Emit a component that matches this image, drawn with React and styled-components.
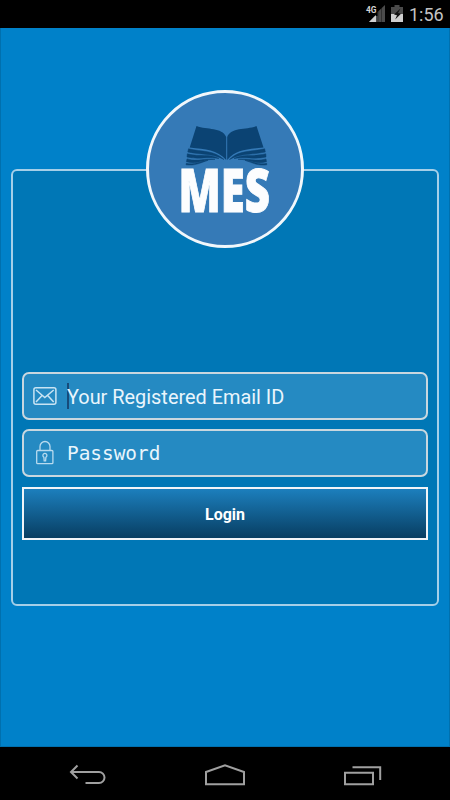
import React from 'react';
import styled, { createGlobalStyle } from 'styled-components';

const StatusBar = () => (
	<StyledStatus>
		<svg width="40" height="28" viewBox="0 0 40 28">
			<text x="1" y="12.600" fill="#d4d4d4" fontFamily="Roboto, sans-serif" fontSize="9.500" fontWeight="700" textLength="10.500" lengthAdjust="spacingAndGlyphs">4G</text>
			<path d="M20 5v17H4l5.500-6h3V12z" fill="#4b4b4b" />
			<path d="M4 22l7-7v7z" fill="#d0d0d0" />
			<path d="M13 22V11M16.500 22V8" stroke="#000" strokeWidth="0.700" opacity="0.500" />
			<path d="M29.500 5h5v2H38v7H26V7h3.500z" fill="#4b4b4b" />
			<path d="M26 14h12v8H26z" fill="#cfcfcf" />
			<path d="M35.500 8.500l-6.500 6 3 .7-1.800 4.300 5.800-5.800-3-.6z" fill="#111" />
		</svg>
		<span>1:56</span>
	</StyledStatus>
);

const Logo = () => (
	<StyledLogo>
		<svg width="152" height="152" viewBox="149 93 152 152">
			<g fill="#0b4373">
				<path d="M196.500 126C207 130 222 127 226.200 137V160C217 149.500 206 149.500 189.700 147.500z" />
				<path d="M256.500 126C246 130 231 127 227.200 137V160C236 149.500 247 149.500 263.500 147.500z" />
				<g stroke="#0b4373" strokeWidth="0.500">
					<path d="M188.500 148.800C202 152 214 150 224 159.500C212 153 201 155 187.800 152z" />
					<path d="M187.300 153.800C201 157 209 153.500 219 158.500C207 156 200 160 187 157z" />
					<path d="M187 158.900C198 162 205 158 215 159.300C204 159 198 165 186.400 161.700z" />
					<path d="M186.300 163.300C194 165 199 162 208 160.300C200 163 195 166 186 164.800z" />
					<path d="M264.700 148.800C251 152 239 150 229.500 159.500C241 153 252 155 265.300 152z" />
					<path d="M265.800 153.800C252 157 244 153.500 234 158.500C246 156 253 160 266 157z" />
					<path d="M266 158.900C255 162 248 158 238 159.300C249 159 255 165 266.500 161.700z" />
					<path d="M266.700 163.300C259 165 254 162 245 160.300C253 163 258 166 266.800 164.800z" />
				</g>
			</g>
			<text
				x="178.500"
				y="212"
				textLength="91.500"
				lengthAdjust="spacingAndGlyphs"
				fill="#fcfdfe"
				stroke="#fcfdfe"
				strokeWidth="1"
				fontFamily="'Open Sans', sans-serif"
				fontWeight="800"
				fontSize="60"
			>
				MES
			</text>
		</svg>
	</StyledLogo>
);

const MailIcon = () => (
	<svg width="24" height="20" viewBox="0 0 24 20" fill="none" stroke="#c9e4f3" strokeWidth="1.500">
		<rect x="0.900" y="1.700" width="22" height="16.600" rx="2" />
		<path d="M3 4l8.800 7.500L20.700 4M3 16l6-6.500M20.700 16l-6-6.500" />
	</svg>
);

const LockIcon = () => (
	<svg width="24" height="26" viewBox="0 0 24 26" fill="none" stroke="#b9dbef" strokeWidth="1.300">
		<rect x="3.700" y="10.500" width="16.200" height="13.200" rx="1" />
		<path d="M7 10.500V6.500a5 5 0 0 1 10 0V10.500" />
		<path d="M10.900 17.200a2 2 0 1 1 2 0l-.3 3.600h-1.400z" />
	</svg>
);

const NavBar = () => (
	<StyledNav>
		<svg width="38" height="22" viewBox="0 0 38 22">
			<path d="M8.500 1.500L2 8l6.500 6.500M2.500 8H30a5.500 5.500 0 0 1 0 11H16.500" />
		</svg>
		<svg width="42" height="24" viewBox="0 0 42 24">
			<path d="M2 9L21 2.200 40 9v12.300H2z" />
		</svg>
		<svg width="40" height="22" viewBox="0 0 40 22">
			<path d="M3 8.700h28v11.600H3zM10.500 3.200H38.200V16" />
		</svg>
	</StyledNav>
);

const App = () => (
	<StyledScreen>
		<GlobalStyle />
		<StatusBar />
		<StyledContent>
			<StyledPanel>
				<Logo />
				<StyledField>
					<MailIcon />
					<StyledCaret />
					<span>Your Registered Email ID</span>
				</StyledField>
				<StyledField $mono>
					<LockIcon />
					<StyledCaret $hidden />
					<span>Password</span>
				</StyledField>
				<StyledButton>Login</StyledButton>
			</StyledPanel>
		</StyledContent>
		<NavBar />
	</StyledScreen>
);

export default App;

const GlobalStyle = createGlobalStyle`
	* {
		box-sizing: border-box;
	}

	body {
		margin: 0;
		background: #000;
		font-family: Roboto, sans-serif;
	}

	svg {
		display: block;
		flex-shrink: 0;
	}
`;

const StyledScreen = styled.div`
	width: 450px;
	height: 800px;
	display: flex;
	flex-direction: column;
	overflow: hidden;
`;

const StyledStatus = styled.div`
	height: 28px;
	background: #000;
	display: flex;
	justify-content: flex-end;
	padding-right: 7px;

	span {
		width: 34px;
		margin-left: 4px;
		color: #c4c4c4;
		font-size: 18px;
		line-height: 29px;
		white-space: nowrap;
	}
`;

const StyledContent = styled.div`
	height: 719px;
	padding: 141px 10px 0;
	background: #0081c9;
	border: solid #0070ae;
	border-width: 0 1px 1px;
`;

const StyledPanel = styled.div`
	height: 437px;
	display: flex;
	flex-direction: column;
	padding: 0 9px;
	background: #0077b6;
	border: 2px solid #a5cfe8;
	border-radius: 6px;
`;

const StyledLogo = styled.div`
	width: 158px;
	height: 158px;
	margin: -81px auto 124px;
	flex-shrink: 0;
	background: #357ab7;
	border: 3px solid #f1f7fb;
	border-radius: 50%;
`;

const StyledField = styled.div`
	height: 48px;
	margin-bottom: 9px;
	flex-shrink: 0;
	display: flex;
	align-items: center;
	padding-left: 9px;
	background: #258ac2;
	border: 2px solid #c9d7df;
	border-radius: 7px;
	color: #e9f5fc;
	font-family: ${({ $mono }) => ($mono ? "'DejaVu Sans Mono', monospace" : 'Roboto, sans-serif')};
	font-size: ${({ $mono }) => ($mono ? '19.4px' : '19.9px')};
	white-space: nowrap;

	span {
		padding-top: ${({ $mono }) => ($mono ? '0' : '2px')};
	}
`;

const StyledCaret = styled.div`
	width: 2px;
	height: 26px;
	margin-left: 10px;
	margin-right: -2px;
	background: ${({ $hidden }) => ($hidden ? 'transparent' : '#174b7a')};
`;

const StyledButton = styled.button`
	height: 53px;
	margin-top: 1px;
	padding: 1px 0 0;
	background: linear-gradient(#1c7fbd, #083e62);
	border: 2px solid #f0f4f8;
	border-radius: 0;
	color: #fff;
	font: 700 16px Roboto, sans-serif;
`;

const StyledNav = styled.div`
	height: 53px;
	padding: 3px 68px 0 69px;
	display: flex;
	align-items: center;
	justify-content: space-between;
	background: #000;

	path {
		fill: none;
		stroke: #a0a0a0;
		stroke-width: 2;
	}
`;
